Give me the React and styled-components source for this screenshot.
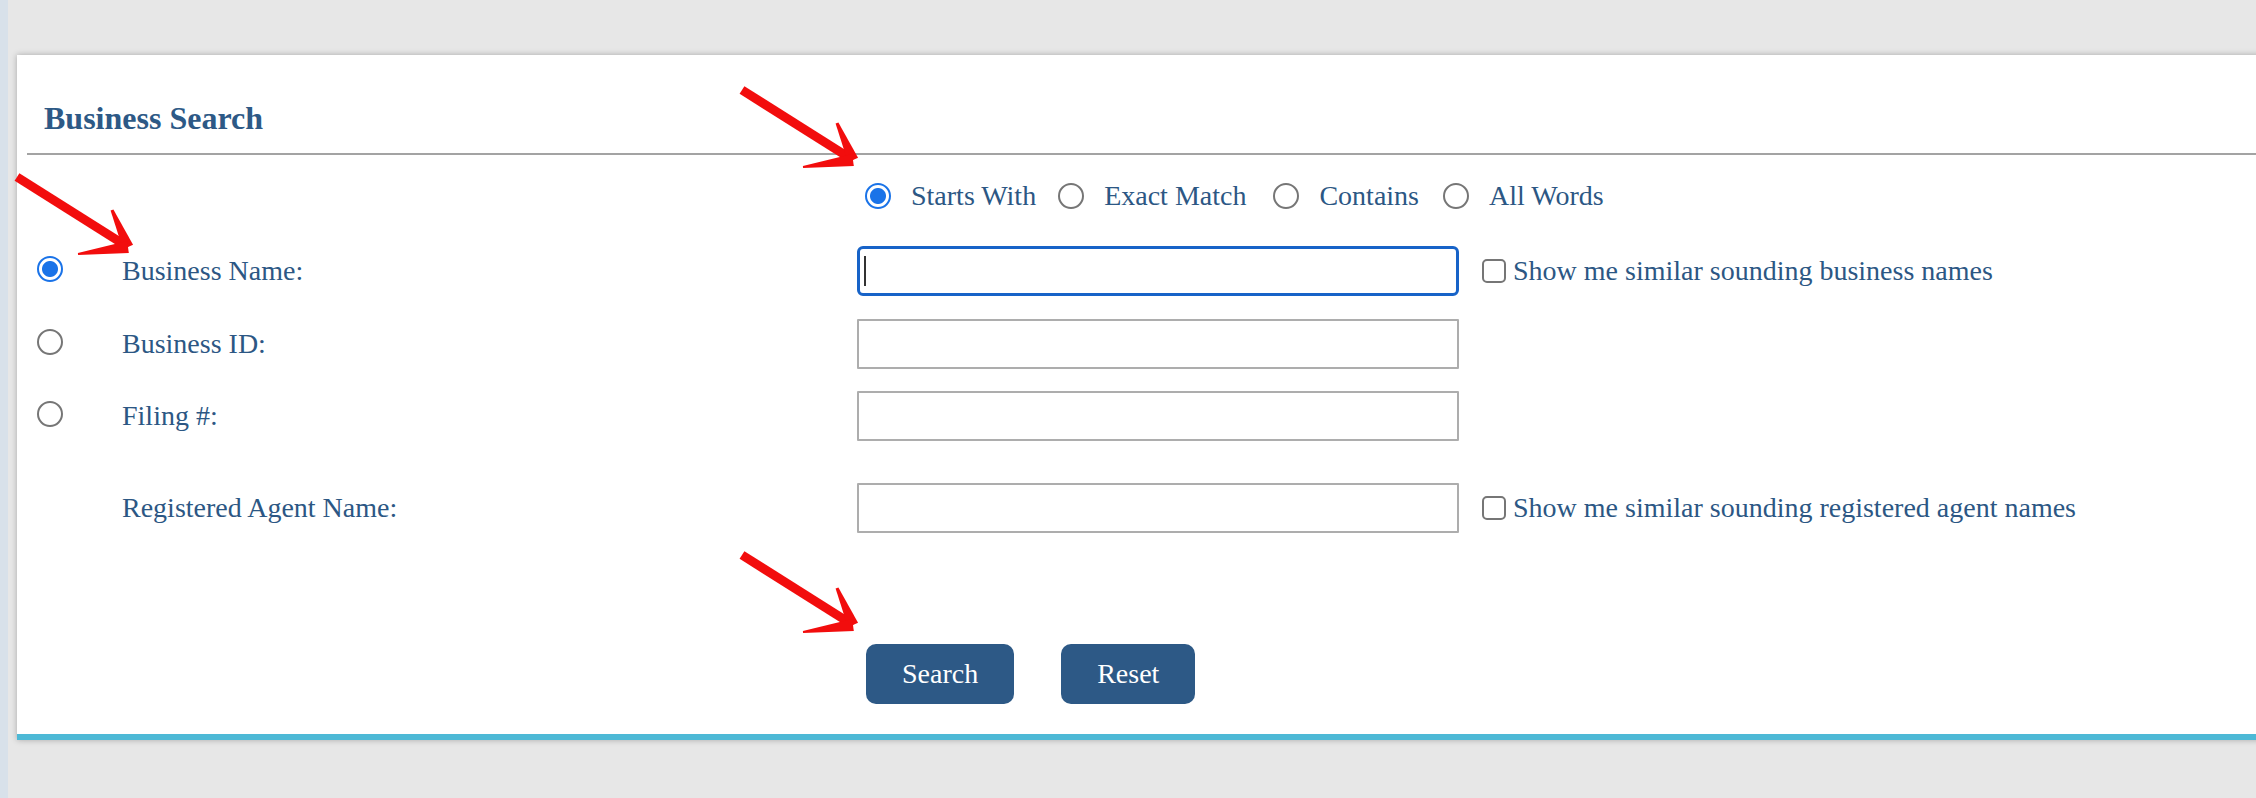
import React from 'react';
import styled, { createGlobalStyle } from 'styled-components';

const Blue = '#2c5784';

const GlobalStyle = createGlobalStyle`
  html, body {
    margin: 0;
    padding: 0;
    background: #e7e7e7;
    overflow: hidden;
    font-family: "Liberation Serif", "Times New Roman", serif;
  }
`;

const Page = styled.div`
  position: relative;
  display: flex;
  min-height: 798px;
`;

const Strip = styled.div`
  width: 8px;
  flex-shrink: 0;
  background: #d8e1ea;
`;

const Main = styled.div`
  flex: 1;
  min-width: 0;
  padding: 55px 0 0 9px;
`;

const Card = styled.section`
  background: #fff;
  margin-right: -40px;
  padding-bottom: 30px;
  border-bottom: 6px solid #4db9d6;
  box-shadow: 0 0 6px rgba(0, 0, 0, 0.28);
`;

const Header = styled.div`
  padding: 45px 0 0 27px;
`;

const Title = styled.h2`
  margin: 0;
  font-size: 32px;
  line-height: 36px;
  font-weight: 700;
  color: #2d5986;
`;

const Rule = styled.div`
  height: 2px;
  margin: 17px 0 0 10px;
  background: #a3a3a3;
`;

const Body = styled.div`
  padding-left: 20px;
  display: flex;
  flex-direction: column;
`;

const Row = styled.div`
  display: grid;
  grid-template-columns: 85px 735px 602px auto;
  align-items: center;
  height: ${p => p.$h || 50}px;
  margin-top: ${p => p.$gap}px;
`;

const MatchGroup = styled.div`
  grid-column: 3 / span 2;
  display: flex;
  align-items: center;
  gap: 22px;
  padding-left: 8px;
`;

const Option = styled.label`
  display: flex;
  align-items: center;
  gap: 20px;
  margin-left: ${p => p.$shift || 0}px;
  font-size: 28px;
  color: ${Blue};
  white-space: nowrap;
`;

const Radio = styled.input.attrs({ type: 'radio' })`
  appearance: none;
  margin: 0;
  width: 26px;
  height: 26px;
  border-radius: 50%;
  border: 2px solid #767676;
  background: #fff;
  flex-shrink: 0;

  &:checked {
    border-color: #1a73e8;
    background: radial-gradient(circle, #1a73e8 0 7.5px, #fff 8.5px);
  }
`;

const Label = styled.span`
  font-size: 28px;
  color: ${Blue};
  white-space: nowrap;
`;

const InputWrap = styled.div`
  position: relative;
  height: 50px;
`;

const TextInput = styled.input.attrs({ type: 'text' })`
  box-sizing: border-box;
  width: 602px;
  height: 50px;
  margin: 0;
  padding: 0 8px;
  font: 28px "Liberation Serif", serif;
  outline: none;
  background: #fff;
  border: ${p => (p.$focused ? '3px solid #1763c8' : '2px solid #adadad')};
  border-radius: ${p => (p.$focused ? '6px' : '1px')};
`;

const Caret = styled.span`
  position: absolute;
  left: 7px;
  top: 10px;
  width: 2px;
  height: 30px;
  background: #333;
`;

const Similar = styled.label`
  display: flex;
  align-items: center;
  gap: 7px;
  margin-left: 23px;
  font-size: 28px;
  color: ${Blue};
  white-space: nowrap;
`;

const Check = styled.input.attrs({ type: 'checkbox' })`
  appearance: none;
  margin: 0;
  width: 24px;
  height: 24px;
  border: 2px solid #767676;
  border-radius: 5px;
  background: #fff;
  flex-shrink: 0;
`;

const Actions = styled.div`
  grid-column: 3 / span 2;
  display: flex;
  gap: 47px;
  padding-left: 9px;
`;

const Button = styled.button`
  height: 60px;
  padding: 0 36px;
  border: none;
  border-radius: 10px;
  background: #2d5986;
  color: #fff;
  font: 28px "Liberation Serif", serif;
  cursor: pointer;
`;

const ArrowMark = styled.svg`
  position: absolute;
  left: ${p => p.$x}px;
  top: ${p => p.$y}px;
  pointer-events: none;
  overflow: visible;
`;

const Arrow = ({ x, y }) => (
  <ArrowMark $x={x} $y={y} width="130" height="90" viewBox="0 0 130 90">
    <polygon points="2.6,8.8 7.4,1.2 118.4,71.2 113.6,78.8" fill="#f20d0d" />
    <polygon points="101.4,37.4 121.05,72.8 110.95,77.2 98.6,38.6" fill="#f20d0d" />
    <polygon points="66.1,83 116.8,80.9 115.2,69.1 65.9,81" fill="#f20d0d" />
  </ArrowMark>
);

const fields = [
  { id: 'name', label: 'Business Name:', radio: true, checked: true, focused: true, similar: 'Show me similar sounding business names', gap: 34 },
  { id: 'bid', label: 'Business ID:', radio: true, gap: 23 },
  { id: 'filing', label: 'Filing #:', radio: true, gap: 22 },
  { id: 'agent', label: 'Registered Agent Name:', similar: 'Show me similar sounding registered agent names', gap: 42 },
];

const matchTypes = [
  { text: 'Starts With', shift: 0 },
  { text: 'Exact Match', shift: 0 },
  { text: 'Contains', shift: 5 },
  { text: 'All Words', shift: 2 },
];

export default function App() {
  return (
    <>
      <GlobalStyle />
      <Page>
        <Strip />
        <Main>
          <Card>
            <Header>
              <Title>Business Search</Title>
            </Header>
            <Rule />
            <Body>
              <Row $h={32} $gap={25}>
                <MatchGroup>
                  {matchTypes.map((m, i) => (
                    <Option key={m.text} $shift={m.shift}>
                      <Radio name="match" defaultChecked={i === 0} />
                      {m.text}
                    </Option>
                  ))}
                </MatchGroup>
              </Row>
              {fields.map(f => (
                <Row key={f.id} $gap={f.gap}>
                  <div>{f.radio && <Radio name="field" defaultChecked={f.checked} />}</div>
                  <Label>{f.label}</Label>
                  <InputWrap>
                    <TextInput $focused={f.focused} />
                    {f.focused && <Caret />}
                  </InputWrap>
                  {f.similar ? (
                    <Similar>
                      <Check />
                      {f.similar}
                    </Similar>
                  ) : <div />}
                </Row>
              ))}
              <Row $h={60} $gap={111}>
                <Actions>
                  <Button>Search</Button>
                  <Button>Reset</Button>
                </Actions>
              </Row>
            </Body>
          </Card>
        </Main>
        <Arrow x={12} y={172} />
        <Arrow x={737} y={85} />
        <Arrow x={737} y={550} />
      </Page>
    </>
  );
}
